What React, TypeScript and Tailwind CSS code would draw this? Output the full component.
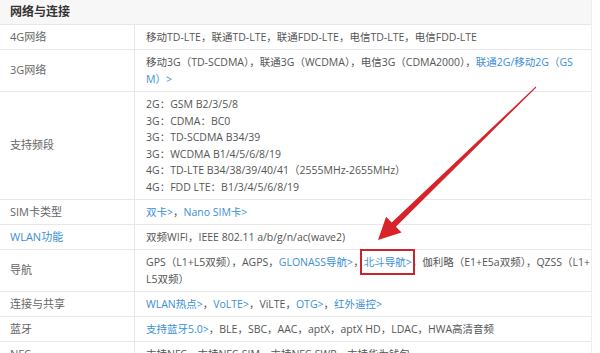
import React from "react";

const L = ({ children }: { children: React.ReactNode }) => (
  <span className="text-[#3a8fd6]">{children}</span>
);

type Row = { label: React.ReactNode; value: React.ReactNode; multi?: boolean };

const rows: Row[] = [
  { label: "4G网络", value: "移动TD-LTE，联通TD-LTE，联通FDD-LTE，电信TD-LTE，电信FDD-LTE" },
  {
    label: "3G网络",
    multi: true,
    value: (
      <>
        移动3G（TD-SCDMA），联通3G（WCDMA），电信3G（CDMA2000），<L>联通2G/移动2G（GS</L>
        <br />
        <L>M）&gt;</L>
      </>
    ),
  },
  {
    label: "支持频段",
    multi: true,
    value: (
      <>
        2G：GSM B2/3/5/8
        <br />
        3G：CDMA：BC0
        <br />
        3G：TD-SCDMA B34/39
        <br />
        3G：WCDMA B1/4/5/6/8/19
        <br />
        4G：TD-LTE B34/38/39/40/41（2555MHz-2655MHz）
        <br />
        4G：FDD LTE：B1/3/4/5/6/8/19
      </>
    ),
  },
  {
    label: "SIM卡类型",
    value: (
      <>
        <L>双卡&gt;</L>，<L>Nano SIM卡&gt;</L>
      </>
    ),
  },
  { label: <L>WLAN功能</L>, value: "双频WIFI，IEEE 802.11 a/b/g/n/ac(wave2)" },
  {
    label: "导航",
    multi: true,
    value: (
      <>
        GPS（L1+L5双频），AGPS，<L>GLONASS导航&gt;</L>，
        <span className="relative">
          <L>北斗导航&gt;</L>
          <span className="absolute -left-[4px] -right-[3px] -top-[6px] -bottom-[6px] border-2 border-[#c8262c]" />
        </span>
        ，伽利略（E1+E5a双频），QZSS（L1+
        <br />
        L5双频）
      </>
    ),
  },
  {
    label: "连接与共享",
    value: (
      <>
        <L>WLAN热点&gt;</L>，<L>VoLTE&gt;</L>，ViLTE，<L>OTG&gt;</L>，<L>红外遥控&gt;</L>
      </>
    ),
  },
  {
    label: "蓝牙",
    value: (
      <>
        <L>支持蓝牙5.0&gt;</L>，BLE，SBC，AAC，aptX，aptX HD，LDAC，HWA高清音频
      </>
    ),
  },
  { label: "NFC", value: "支持NFC，支持NFC-SIM，支持NFC-SWP，支持华为钱包" },
];

export default function App() {
  return (
    <div
      className="relative w-[600px] h-[353px] overflow-hidden bg-white text-[11px] text-[#555]"
      style={{ fontFamily: '"Open Sans", "Noto Sans CJK SC", sans-serif' }}
    >
      <div className="w-[592px] border-r border-[#eeeeee]">
        <div className="h-[25px] flex items-center px-[10px] bg-[#f7f7f7] border-b border-[#e8e8e8] text-[12px] font-bold text-[#333]">
          网络与连接
        </div>
        {rows.map((r, i) => (
          <div key={i} className="flex border-b border-[#e8e8e8]">
            <div className="w-[135px] shrink-0 flex items-center px-[10px] border-r border-[#e8e8e8] text-[#666]">
              {r.label}
            </div>
            <div
              className={`flex-1 pl-[11px] pr-2 py-[4px] text-[10.5px] whitespace-nowrap ${
                r.multi ? "leading-[16.5px]" : "leading-[16px]"
              }`}
            >
              {r.value}
            </div>
          </div>
        ))}
      </div>
      <svg className="absolute inset-0 pointer-events-none" width="600" height="353">
        <polygon
          points="536.3,87.4 535.7,86.6 391.7,222.5 386.1,216.7 378,240 401.5,232.5 395.9,226.7"
          fill="#d8232a"
        />
      </svg>
    </div>
  );
}
